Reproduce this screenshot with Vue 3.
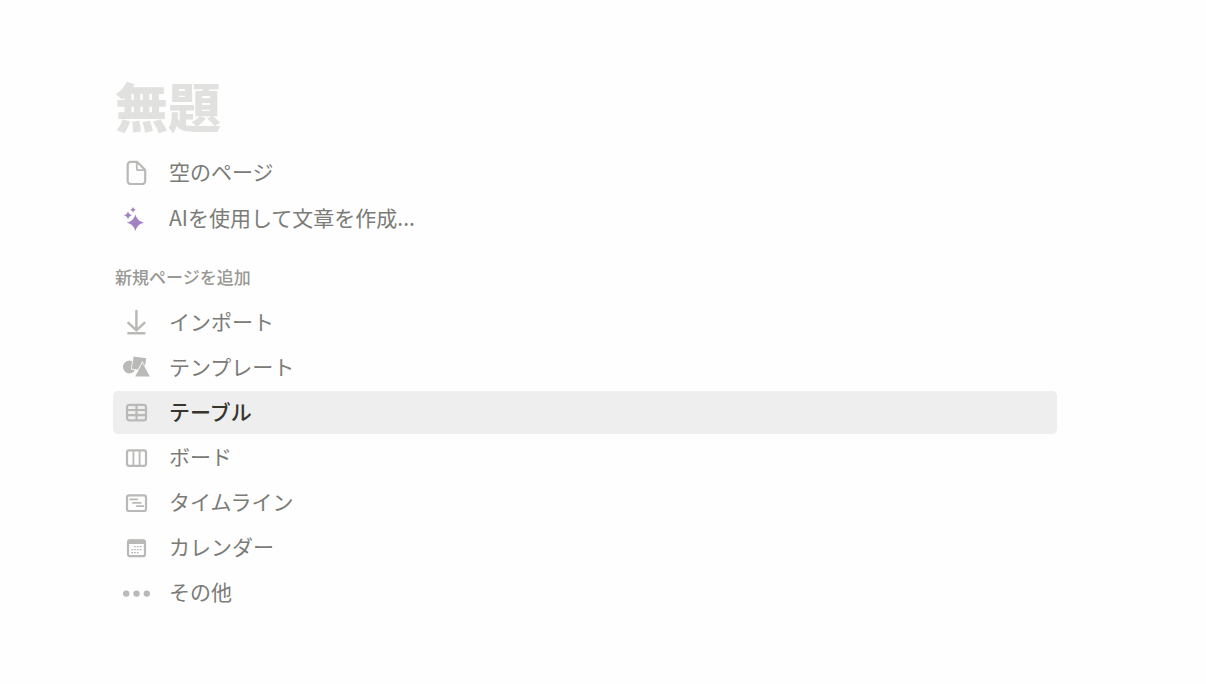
<script setup>
import { ref } from 'vue'

const title = ref('')
const starters = [
  { id: 'page', label: '空のページ' },
  { id: 'ai', label: 'AIを使用して文章を作成...' },
]
const blocks = [
  { id: 'import', label: 'インポート' },
  { id: 'template', label: 'テンプレート' },
  { id: 'table', label: 'テーブル' },
  { id: 'board', label: 'ボード' },
  { id: 'timeline', label: 'タイムライン' },
  { id: 'calendar', label: 'カレンダー' },
  { id: 'more', label: 'その他' },
]
const groups = [
  { heading: '', items: starters },
  { heading: '新規ページを追加', items: blocks },
]
const selected = ref('table')
</script>

<template>
  <main class="page">
    <input v-model="title" class="title" type="text" placeholder="無題" aria-label="無題" />
    <section v-for="(group, i) in groups" :key="i" class="group">
      <h2 v-if="group.heading" class="heading">{{ group.heading }}</h2>
      <ul class="list" :class="{ starters: !group.heading }">
        <li v-for="item in group.items" :key="item.id">
          <button
            type="button"
            class="row"
            :class="{ active: selected === item.id }"
            @click="selected = item.id"
          >
            <svg class="icon" viewBox="0 0 27 27" aria-hidden="true">
              <g v-if="item.id === 'page'" class="line">
                <path d="M7.7 2.8H14L22.2 11V22a3 3 0 0 1-3 3H7.7a3 3 0 0 1-3-3V5.8a3 3 0 0 1 3-3Z" />
                <path class="thin" d="M13.8 3V9.4a1.8 1.8 0 0 0 1.8 1.8H22" />
              </g>
              <g v-else-if="item.id === 'ai'" class="spark">
                <path d="M12.4 9.5Q14 16.1 21 17.7Q14 19.3 12.4 26Q10.8 19.3 3.8 17.7Q10.8 16.1 12.4 9.5Z" />
                <path d="M5 6.2Q5.8 9.5 9.2 10.3Q5.8 11.1 5 14.4Q4.2 11.1 .8 10.3Q4.2 9.5 5 6.2Z" />
                <path d="M10 2Q10.5 4.2 12.8 4.7Q10.5 5.2 10 7.4Q9.5 5.2 7.2 4.7Q9.5 4.2 10 2Z" />
              </g>
              <path
                v-else-if="item.id === 'import'"
                class="line arrow"
                d="M13.4 2V21M5.4 13.8L13.4 21.4L21.4 13.8M5.4 24.2H21.4"
              />
              <g v-else-if="item.id === 'template'" class="solid">
                <circle cx="6.4" cy="13" r="6.4" />
                <path class="cut" d="M10.6 2.4L23.2 4.2L21.4 16.4L8.8 14.8Z" />
                <path class="cut" d="M19.4 8.8L26.8 22.4H12.2Z" />
              </g>
              <g v-else-if="item.id === 'table'" class="line">
                <rect x="4" y="5.8" width="19" height="15.6" rx="2.4" />
                <path d="M4 11H23M4 16.2H23M13.5 5.8V21.4" />
              </g>
              <g v-else-if="item.id === 'board'" class="line">
                <rect x="4" y="6.4" width="19" height="15.4" rx="2" />
                <path class="thin" d="M10.4 6.4V21.8M16.6 6.4V21.8" />
              </g>
              <g v-else-if="item.id === 'timeline'" class="line">
                <rect x="4" y="6.4" width="19" height="15.6" rx="2" />
                <path class="thin" d="M6.4 10.4H14.8M9.2 13.8H18.4M13.2 17.2H21" />
              </g>
              <g v-else-if="item.id === 'calendar'">
                <rect class="line" x="5" y="6.4" width="17" height="15.8" rx="2" />
                <path class="solid" d="M4.4 7.4a2 2 0 0 1 2-2h14.2a2 2 0 0 1 2 2v2.6H4.4Z" />
                <path
                  class="days"
                  d="M11 12.6H19.4M8.2 15.6H19.4M8.2 18.6H16.2"
                />
              </g>
              <g v-else class="solid">
                <circle cx="3.2" cy="14.6" r="3.2" />
                <circle cx="13.5" cy="14.6" r="3.2" />
                <circle cx="23.8" cy="14.6" r="3.2" />
              </g>
            </svg>
            <span class="label">{{ item.label }}</span>
          </button>
        </li>
      </ul>
    </section>
  </main>
</template>

<style>
body {
  margin: 0;
  background: #fefefe;
}
</style>

<style scoped>
.page {
  padding: 73px 149px 60px 113px;
  font-family: "Noto Sans CJK JP", sans-serif;
  color: #7b7b77;
}
.title {
  display: block;
  box-sizing: border-box;
  width: 100%;
  height: 64px;
  margin: 0 0 14px;
  padding: 0 2px;
  border: 0;
  outline: 0;
  background: transparent;
  color: #37352f;
  font-family: inherit;
  font-size: 53px;
  font-weight: 900;
  line-height: 64px;
}
.title::placeholder {
  color: #e1e1df;
  opacity: 1;
}
.heading {
  margin: 25px 0 12px;
  padding: 0 2px;
  color: #989894;
  font-size: 17px;
  font-weight: 500;
  line-height: 24px;
}
.list {
  display: grid;
  gap: 2px;
  margin: 0;
  padding: 0;
  list-style: none;
}
.starters {
  gap: 3px;
}
.row {
  display: flex;
  align-items: center;
  gap: 19px;
  width: 100%;
  height: 43px;
  padding: 0 10px;
  border: 0;
  border-radius: 5px;
  background: transparent;
  color: inherit;
  font-family: inherit;
  font-size: 21px;
  font-weight: 400;
  line-height: 32px;
  text-align: left;
  cursor: pointer;
}
.label {
  padding-bottom: 3px;
}
.active {
  background: #eeeeee;
  color: #37352f;
  font-weight: 500;
}
.icon {
  flex: none;
  width: 27px;
  height: 27px;
  overflow: visible;
}
.line {
  fill: none;
  stroke: #b9b9b7;
  stroke-width: 2.2;
  stroke-linejoin: round;
}
.thin {
  stroke-width: 1.8;
}
.arrow {
  stroke-width: 2.5;
  stroke-linecap: round;
}
.solid {
  fill: #b9b9b7;
}
.cut {
  stroke: #fefefe;
  stroke-width: 1.6;
  paint-order: stroke;
}
.spark {
  fill: #a281c1;
}
.days {
  fill: none;
  stroke: #b9b9b7;
  stroke-width: 1.4;
  stroke-dasharray: 1.8 1;
}
</style>
